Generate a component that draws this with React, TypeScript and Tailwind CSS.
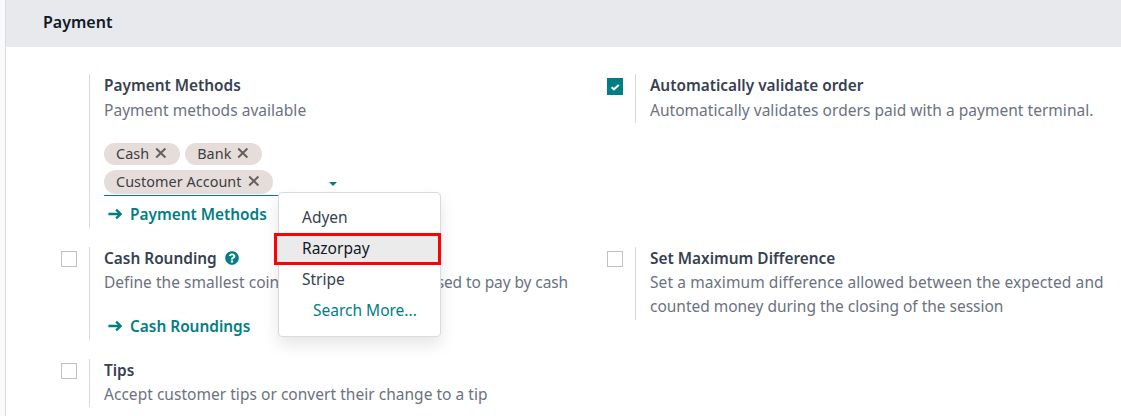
import type { ReactNode } from "react";
import { FaQuestionCircle } from "react-icons/fa";

function Checkbox({ checked = false }: { checked?: boolean }) {
  return (
    <span
      role="checkbox"
      aria-checked={checked}
      className={
        checked
          ? "mt-1 flex h-[17px] w-4 shrink-0 items-center justify-center bg-[#017e84] text-white"
          : "mt-1 block size-4 shrink-0 border border-[#bfc1c5] bg-white"
      }
    >
      {checked && (
        <svg viewBox="0 0 16 16" className="size-4" fill="none" stroke="currentColor" strokeWidth="2">
          <path d="M4.6 8.2 6.9 10.3 11.8 5.9" />
        </svg>
      )}
    </span>
  );
}

type SettingProps = {
  title: string;
  checkbox?: "on" | "off";
  help?: boolean;
  boxClass: string;
  titleClass?: string;
  children: ReactNode;
};

function Setting({ title, checkbox, help, boxClass, titleClass = "h-[23px]", children }: SettingProps) {
  return (
    <section className="flex">
      <div className="w-7 shrink-0">{checkbox && <Checkbox checked={checkbox === "on"} />}</div>
      <div className={"border-l border-[#d8dadd] pl-3.5 " + boxClass}>
        <h3 className={"flex items-start text-[15.4px] leading-6 font-semibold text-[#374151] " + titleClass}>
          {title}
          {help && <FaQuestionCircle className="mt-1 ml-2 size-3.5 text-[#017e84]" />}
        </h3>
        {children}
      </div>
    </section>
  );
}

function Description({ children }: { children: ReactNode }) {
  return (
    <p className="text-[15.5px] leading-6 tracking-[0.03px] whitespace-nowrap text-[#6b7280]">{children}</p>
  );
}

function ActionLink({ children }: { children: ReactNode }) {
  return (
    <a className="flex h-6 items-center pl-1 text-[15.4px] leading-6 font-semibold text-[#017e84]">
      <svg viewBox="0 0 14 12" className="mr-2 h-3 w-3.5" fill="none" stroke="currentColor" strokeWidth="2.3">
        <path d="M0.4 6H12.6M8.2 1.6 12.6 6 8.2 10.4" />
      </svg>
      <span className="pt-0.5">{children}</span>
    </a>
  );
}

function Tag({ label, tall = false }: { label: string; tall?: boolean }) {
  return (
    <span
      className={
        "flex items-center rounded-full bg-[#e6dddb] pr-[13px] pl-3 text-[14.4px] leading-5 tracking-[0.05px] text-[#3d3d42] " +
        (tall ? "h-6" : "h-[22px]")
      }
    >
      {label}
      <svg viewBox="0 0 12 12" className="mb-0.5 ml-1.5 size-3 text-[#65605f]" fill="none" stroke="currentColor" strokeWidth="2">
        <path d="M1.2 1.5 10.4 10.5M10.4 1.5 1.2 10.5" />
      </svg>
    </span>
  );
}

function Dropdown() {
  return (
    <div className="absolute top-[118px] left-[188px] z-10 h-[145px] w-[163px] rounded border border-[#d8dadd] bg-white py-[9px] text-[15.5px] text-[#374151] shadow-[0_8px_16px_rgba(0,0,0,0.1)]">
      <div className="flex h-[31px] items-center pl-[23px]">Adyen</div>
      <div className="-mr-px -ml-[5px] flex h-8 items-center border-[3px] border-[#fb0207] bg-[#ebebeb] pl-[25px] text-[#111827]">
        Razorpay
      </div>
      <div className="flex h-[30px] items-center pl-[23px]">Stripe</div>
      <div className="flex h-8 items-center pl-[34px] text-[#017e84]">Search More...</div>
    </div>
  );
}

export default function App() {
  return (
    <div className="flex h-[416px] w-full overflow-hidden bg-[#f9fafb] pl-[5px] font-['Noto_Sans',sans-serif]">
      <main className="flex-1 border-l border-[#d8dadd] bg-white">
        <header className="flex h-[47px] items-center bg-[#e7e9ed] pb-[3px] pl-[37px]">
          <h2 className="text-base font-semibold text-[#111827]">Payment</h2>
        </header>

        <div className="grid grid-cols-[546px_1fr] grid-rows-[173px_112px_auto] pt-[27px] pl-[55px]">
          <Setting title="Payment Methods" titleClass="h-6" boxClass="relative h-[154px]">
            <Description>Payment methods available</Description>
            <div className="mt-[21px] w-[236px] border-b border-[#017e84] pb-px">
              <div className="flex h-[22px] gap-[5px]">
                <Tag label="Cash" />
                <Tag label="Bank" />
              </div>
              <div className="mt-[5px] flex items-center">
                <Tag label="Customer Account" tall />
                <svg viewBox="0 0 8 4" className="mt-[3px] mr-[3px] ml-auto h-1 w-2 text-[#017e84]" fill="currentColor">
                  <path d="M0 0H8L4 4Z" />
                </svg>
              </div>
            </div>
            <div className="mt-1.5">
              <ActionLink>Payment Methods</ActionLink>
            </div>
            <Dropdown />
          </Setting>

          <Setting title="Automatically validate order" titleClass="h-6" checkbox="on" boxClass="h-[49px]">
            <Description>Automatically validates orders paid with a payment terminal.</Description>
          </Setting>

          <Setting title="Cash Rounding" checkbox="off" help boxClass="h-[93px]">
            <Description>
              Define the smallest coin
              <span className="tracking-[0.14px]">age of the currency u</span>
              <span className="tracking-[-0.1px]">sed to pay by cash</span>
            </Description>
            <div className="mt-5">
              <ActionLink>Cash Roundings</ActionLink>
            </div>
          </Setting>

          <Setting title="Set Maximum Difference" checkbox="off" boxClass="h-[73px]">
            <Description>
              <span className="tracking-[0.09px]">Set a maximum difference allowed between the expected and</span>
              <br />
              <span className="tracking-[-0.02px]">counted money during the closing of the session</span>
            </Description>
          </Setting>

          <Setting title="Tips" checkbox="off" boxClass="h-12">
            <Description>Accept customer tips or convert their change to a tip</Description>
          </Setting>
        </div>
      </main>
    </div>
  );
}
